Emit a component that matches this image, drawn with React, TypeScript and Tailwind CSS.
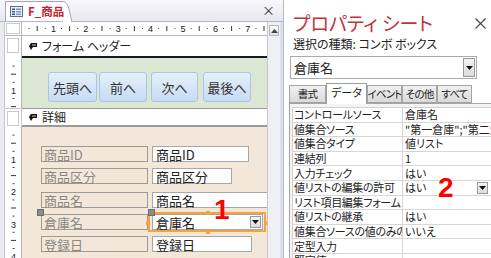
import React from 'react';

// ─────────────────────────────────────────────────────────────────
// Rulers
// ─────────────────────────────────────────────────────────────────
const UNIT = 32.4;

function HRuler() {
  const marks: React.ReactNode[] = [];
  for (let i = 1; i <= 31; i++) {
    const x = -1 + (i * UNIT) / 4;
    if (i % 4 === 0) {
      marks.push(
        <text key={i} x={x} y={10} fontSize="9" textAnchor="middle" fill="#222" fontFamily="Liberation Sans, sans-serif">
          {i / 4}
        </text>
      );
    } else if (i % 2 === 0) {
      marks.push(<rect key={i} x={x - 0.5} y={4} width={1} height={5} fill="#333" />);
    } else {
      marks.push(<rect key={i} x={x - 0.5} y={6} width={1} height={1} fill="#444" />);
    }
  }
  return (
    <svg width="245" height="13" className="block">
      {marks}
    </svg>
  );
}

function VRuler({ height }: { height: number }) {
  const marks: React.ReactNode[] = [];
  const n = Math.floor(height / (UNIT / 4));
  for (let i = 1; i <= n; i++) {
    const y = (i * UNIT) / 4;
    if (i % 4 === 0) {
      marks.push(
        <text key={i} x={8.5} y={y + 3.5} fontSize="9" textAnchor="middle" fill="#222" fontFamily="Liberation Sans, sans-serif">
          {i / 4}
        </text>
      );
    } else if (i % 2 === 0) {
      marks.push(<rect key={i} x={6} y={y - 0.5} width={5} height={1} fill="#333" />);
    } else {
      marks.push(<rect key={i} x={7.5} y={y - 0.5} width={2} height={1} fill="#444" />);
    }
  }
  return (
    <svg width="17" height={height} className="block">
      {marks}
    </svg>
  );
}

// ─────────────────────────────────────────────────────────────────
// Small pieces
// ─────────────────────────────────────────────────────────────────
function SectionIcon() {
  return (
    <svg width="10" height="9" viewBox="0 0 10 9" className="block">
      <path d="M9 1 L3 1 L1 4 L3 8 L5 5 L9 5 Z" fill="#111" />
      <path d="M4 3 L8 3" stroke="#fff" strokeWidth="0.8" />
    </svg>
  );
}

function DropArrow({ className = '' }: { className?: string }) {
  return (
    <div className={`shrink-0 flex items-center justify-center bg-linear-to-b from-[#f4f4f4] to-[#dcdcdc] border border-[#9a9a9a] ${className}`}>
      <svg width="7" height="4" viewBox="0 0 7 4">
        <path d="M0 0 L7 0 L3.5 4 Z" fill="#111" />
      </svg>
    </div>
  );
}

function SectionBar({ label, top = false }: { label: string; top?: boolean }) {
  return (
    <div className="flex">
      <div className={`w-[17px] bg-white border-r border-[#b5b5b5] ${top ? '' : 'border-t border-[#c9c9c9]'}`}>
        <div className="mx-[2px] mt-[2px] h-[15px] border border-[#c9c9c9]" />
      </div>
      <div className={`flex-1 bg-white border-b-2 border-[#1b1b1b] flex items-center gap-[4px] pl-[6px] text-[12px] leading-none text-[#222] ${top ? 'h-[22px]' : 'h-[19px] border-t border-[#9a9a9a]'}`}>
        <SectionIcon />
        <span>{label}</span>
      </div>
    </div>
  );
}

const FIELDS: { name: string; w: number; combo?: boolean; mt: number }[] = [
  { name: '商品ID', w: 97, mt: 19 },
  { name: '商品区分', w: 80, mt: 6 },
  { name: '商品名', w: 116, mt: 8 },
  { name: '倉庫名', w: 111, combo: true, mt: 6 },
  { name: '登録日', w: 100, mt: 6 },
];

const PROPS: { label: string; value: string; drop?: boolean }[] = [
  { label: 'コントロールソース', value: '倉庫名' },
  { label: '値集合ソース', value: '"第一倉庫";"第二倉庫";"第三倉庫"' },
  { label: '値集合タイプ', value: '値リスト' },
  { label: '連結列', value: '1' },
  { label: '入力チェック', value: 'はい' },
  { label: '値リストの編集の許可', value: 'はい', drop: true },
  { label: 'リスト項目編集フォーム', value: '' },
  { label: '値リストの継承', value: 'はい' },
  { label: '値集合ソースの値のみの表示', value: 'いいえ' },
  { label: '定型入力', value: '' },
  { label: '既定値', value: '' },
];

const TABS = [
  { name: '書式', w: 37 },
  { name: 'データ', w: 41, active: true },
  { name: 'イベント', w: 35 },
  { name: 'その他', w: 35 },
  { name: 'すべて', w: 35 },
];

// ─────────────────────────────────────────────────────────────────
// Form design pane
// ─────────────────────────────────────────────────────────────────
function FormDesigner() {
  return (
    <div className="w-[283px] shrink-0 h-full flex flex-col">
      {/* document tab */}
      <div className="h-[22px] shrink-0 bg-linear-to-b from-[#f8f8fb] to-[#e7e8ef] border-b border-[#b3b6c2] flex items-end relative">
        <div className="ml-[5px] h-[20px] w-[58px] shrink-0 bg-white border-t border-l border-[#a3a6b3] flex items-center gap-[5px] pl-[4px] relative z-10">
          <svg width="13" height="11" viewBox="0 0 13 11" className="block shrink-0">
            <rect x="0.5" y="0.5" width="12" height="10" fill="#e8eef7" stroke="#5a6f91" />
            <rect x="2" y="2.5" width="3" height="1.5" fill="#3b5a8a" />
            <rect x="6" y="2.5" width="5" height="1.5" fill="#7e96bd" />
            <rect x="2" y="5" width="3" height="1.5" fill="#3b5a8a" />
            <rect x="6" y="5" width="5" height="1.5" fill="#7e96bd" />
            <rect x="2" y="7.5" width="3" height="1.5" fill="#3b5a8a" />
            <rect x="6" y="7.5" width="5" height="1.5" fill="#7e96bd" />
          </svg>
          <span className="text-[11.5px] leading-none font-bold text-[#c0272d] whitespace-nowrap">F_商品</span>
        </div>
        <svg width="10" height="21" viewBox="0 0 10 21" className="block shrink-0 -mb-px">
          <path d="M0 0.5 Q4 0.5 6 8 L9 21 L0 21 Z" fill="#fff" />
          <path d="M0 0.5 Q4 0.5 6 8 L9 21" fill="none" stroke="#a3a6b3" />
        </svg>
        <span className="absolute right-[8px] top-[3px] text-[13px] leading-none text-[#333]">×</span>
      </div>

      <div className="flex flex-1 min-h-0">
        {/* window edge */}
        <div className="w-[5px] bg-[#e9ebf0] border-r border-[#c3c6cf]" />

        <div className="w-[262px] flex flex-col overflow-hidden">
          {/* ruler row */}
          <div className="flex h-[14px] shrink-0 border-b border-[#b5b5b5]">
            <div className="w-[17px] bg-white border-r border-[#b5b5b5] p-[1px]">
              <div className="h-full border border-[#c9c9c9]" />
            </div>
            <div className="flex-1 bg-white">
              <HRuler />
            </div>
          </div>

          {/* form header */}
          <SectionBar label="フォーム ヘッダー" top />
          <div className="flex h-[50px] shrink-0">
            <div className="w-[17px] bg-white border-r border-[#b5b5b5]">
              <VRuler height={50} />
            </div>
            <div className="flex-1 bg-[#dce7d3] flex items-start pl-[26px] pt-[14px]">
              {[
                { t: '先頭へ', w: 49, ml: '' },
                { t: '前へ', w: 48, ml: 'ml-[2px]' },
                { t: '次へ', w: 47, ml: 'ml-[4px]' },
                { t: '最後へ', w: 48, ml: 'ml-[5px]' },
              ].map((b) => (
                <div
                  key={b.t}
                  className={`h-[30px] rounded-[3px] border border-[#a8c6e8] bg-linear-to-b from-[#e6f0fb] to-[#c6dbf3] flex items-center justify-center text-[13px] leading-none text-[#333] ${b.ml}`}
                  style={{ width: b.w }}
                >
                  {b.t}
                </div>
              ))}
            </div>
          </div>

          {/* detail */}
          <SectionBar label="詳細" />
          <div className="flex flex-1 min-h-0">
            <div className="w-[17px] bg-white border-r border-[#b5b5b5]">
              <VRuler height={131} />
            </div>
            <div className="flex-1 bg-[#f3e7d9] relative pl-[19px] flex flex-col">
              {FIELDS.map((f) => (
                <div key={f.name} className="flex items-center h-[16px]" style={{ marginTop: f.mt }}>
                  <div className="w-[107px] h-[16px] border border-[#9d9a97] flex items-center pl-[2px] text-[13px] leading-none text-[#8a8785]">
                    {f.name}
                  </div>
                  <div
                    className="ml-[4px] h-[16px] bg-white border border-[#a7a7a7] flex items-center pl-[3px] text-[13px] leading-none text-[#222]"
                    style={{ width: f.w }}
                  >
                    <span className="flex-1">{f.name}</span>
                    {f.combo && <DropArrow className="w-[11px] h-[12px] mr-[1px]" />}
                  </div>
                </div>
              ))}

              {/* selection of the combo box */}
              <div className="absolute left-[126px] top-[85px] w-[118px] h-[20px] border-2 border-[#f7a23b]" />
              <div className="absolute left-[184px] top-[84px] w-[4px] h-[4px] bg-[#f7a23b]" />
              <div className="absolute left-[184px] top-[103px] w-[4px] h-[4px] bg-[#f7a23b]" />
              <div className="absolute left-[124px] top-[94px] w-[4px] h-[4px] bg-[#f7a23b]" />
              <div className="absolute left-[242px] top-[94px] w-[4px] h-[4px] bg-[#f7a23b]" />
              <div className="absolute left-[15px] top-[82px] w-[7px] h-[7px] bg-[#8c8c8c] border border-[#6d6d6d]" />
              <div className="absolute left-[126px] top-[82px] w-[7px] h-[7px] bg-[#8c8c8c] border border-[#6d6d6d]" />

              <span className="absolute left-[192px] top-[69px] text-[28px] leading-none font-bold text-[#ff0000] font-['Liberation_Sans',sans-serif]">
                1
              </span>
            </div>
          </div>
        </div>

        {/* vertical scrollbar */}
        <div className="w-[13px] bg-[#eef0f3] border-l border-[#c4c7cf] pt-[3px] px-[1px]">
          <div className="h-[11px] bg-linear-to-b from-[#fbfbfb] to-[#e3e3e3] border border-[#b9b9b9] flex items-center justify-center">
            <svg width="7" height="4" viewBox="0 0 7 4">
              <path d="M0 4 L7 4 L3.5 0 Z" fill="#444" />
            </svg>
          </div>
        </div>
        <div className="w-[3px] bg-[#dcdfe6]" />
      </div>
    </div>
  );
}

// ─────────────────────────────────────────────────────────────────
// Property sheet
// ─────────────────────────────────────────────────────────────────
function PropertySheet() {
  return (
    <div className="flex-1 h-full bg-white border-l border-[#b7bac3] relative overflow-hidden">
      <div className="pl-[9px] pt-[13px] text-[19px] leading-none text-[#c2323a] whitespace-nowrap">プロパティ シート</div>
      <span className="absolute right-[2px] top-[14px] text-[17px] leading-none text-[#444]">×</span>
      <div className="pl-[9px] mt-[6px] text-[12px] leading-none text-[#222] whitespace-nowrap">選択の種類: コンボ ボックス</div>

      <div className="ml-[6px] mt-[6px] w-[187px] h-[23px] border border-[#a9abb2] flex items-center pl-[3px] pr-[1px]">
        <span className="flex-1 text-[13px] leading-none text-[#222]">倉庫名</span>
        <DropArrow className="w-[12px] h-[19px]" />
      </div>

      {/* tabs */}
      <div className="ml-[5px] mt-[4px] h-[20px] flex items-end">
        {TABS.map((t) =>
          t.active ? (
            <div
              key={t.name}
              className="h-[21px] bg-white border border-b-0 border-[#9c9c9c] flex items-start justify-center pt-[3px] text-[11px] leading-none whitespace-nowrap text-[#222] relative z-10 -mb-px"
              style={{ width: t.w }}
            >
              {t.name}
            </div>
          ) : (
            <div
              key={t.name}
              className="h-[18px] bg-linear-to-b from-[#f0f0f0] to-[#dadada] border border-[#a4a4a4] flex items-center justify-center overflow-hidden text-[10.5px] leading-none whitespace-nowrap tracking-[-0.8px] text-[#222]"
              style={{ width: t.w }}
            >
              {t.name}
            </div>
          )
        )}
      </div>

      {/* property grid */}
      <div className="ml-[5px] border-t border-l border-[#a4a4a4] pt-[3px] pl-[2px] bg-[#f4f4f4]">
        <div className="border-t border-l border-[#cfcfcf] bg-white">
          {PROPS.map((p) => (
            <div key={p.label} className="flex h-[14.6px] border-b border-[#d6d6d6] text-[11px] leading-none text-[#222]">
              <div className="w-[110px] shrink-0 border-r border-[#d6d6d6] pl-[1px] flex items-center overflow-hidden whitespace-nowrap tracking-[-0.3px]">
                {p.label}
              </div>
              <div className="flex-1 min-w-0 flex items-center pl-[2px] overflow-hidden whitespace-nowrap">
                <span className="flex-1">{p.value}</span>
                {p.drop && <DropArrow className="w-[11px] h-[12px] mr-[3px]" />}
              </div>
            </div>
          ))}
        </div>
      </div>

      <span className="absolute left-[154px] top-[174px] text-[28px] leading-none font-bold text-[#ff0000] font-['Liberation_Sans',sans-serif]">
        2
      </span>
    </div>
  );
}

// ─────────────────────────────────────────────────────────────────
// Root App
// ─────────────────────────────────────────────────────────────────
export default function App() {
  return (
    <div className="w-[491px] h-[258px] flex overflow-hidden bg-white font-['Noto_Sans_CJK_JP',sans-serif] [font-feature-settings:'palt']">
      <FormDesigner />
      <PropertySheet />
    </div>
  );
}
